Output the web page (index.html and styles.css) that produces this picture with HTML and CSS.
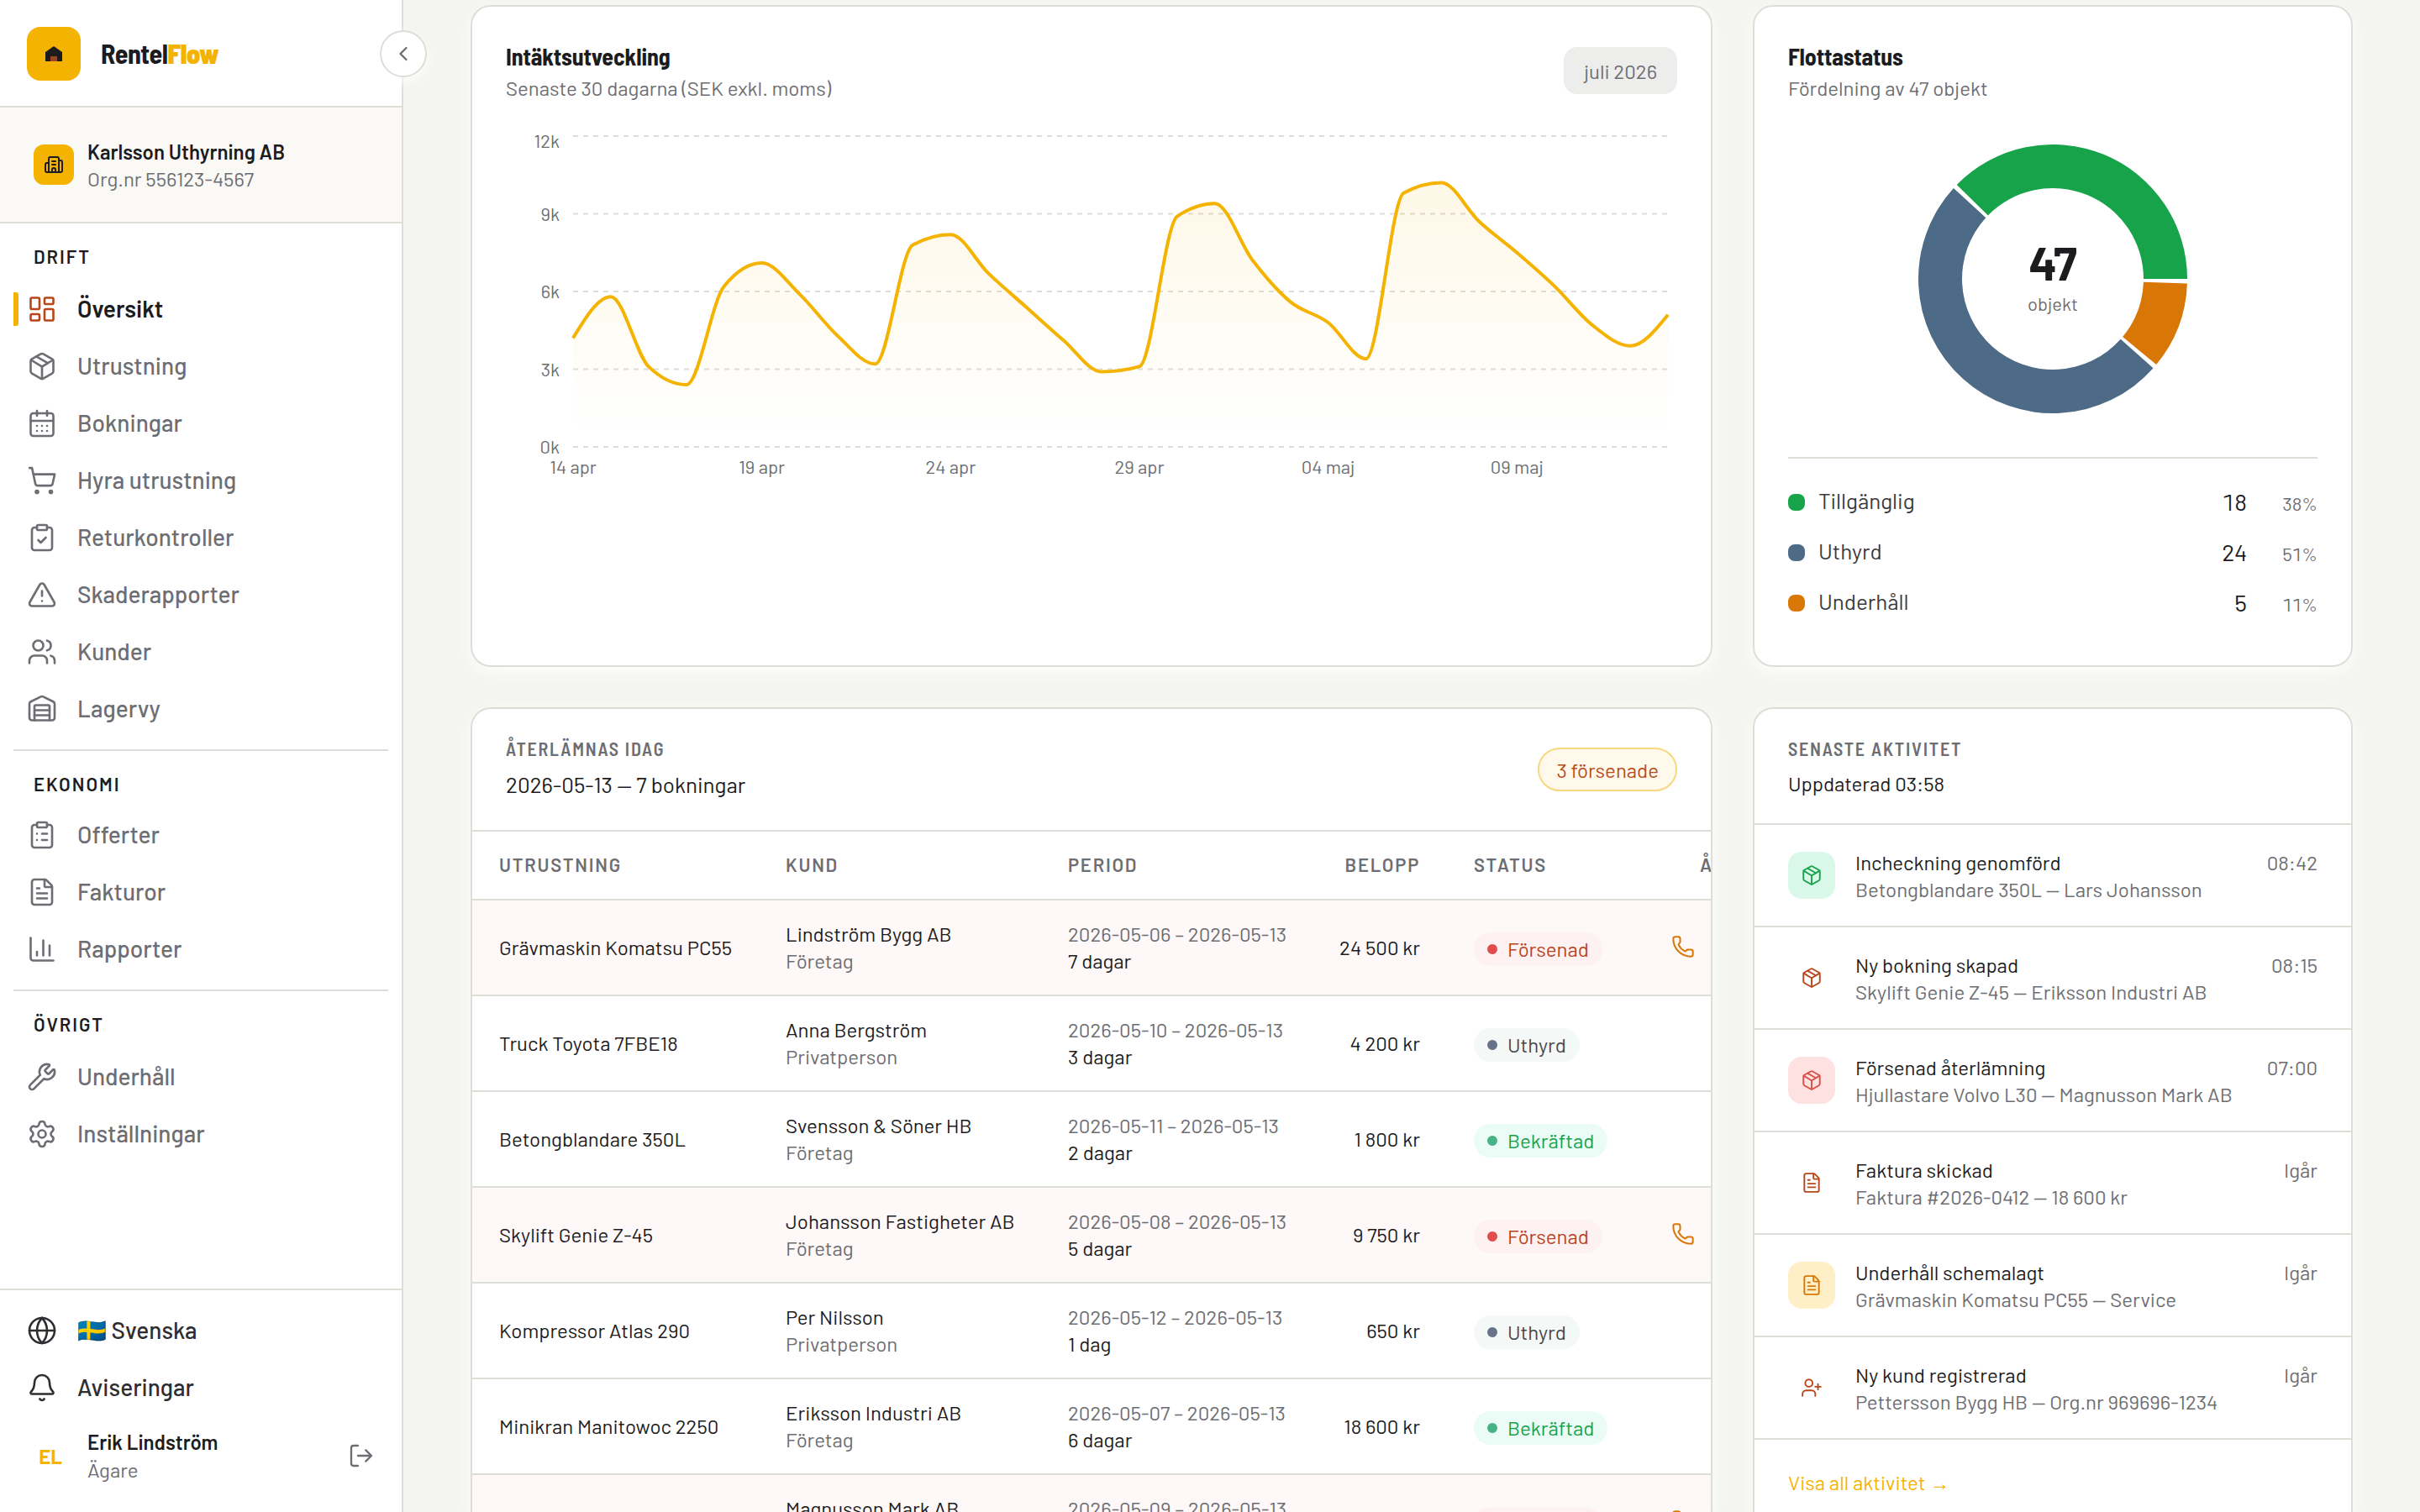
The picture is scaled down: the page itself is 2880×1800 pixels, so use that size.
FILE: index.html
```
<!DOCTYPE html>
<html lang="sv">

<head>
	<meta charset="UTF-8">
	<title>RentelFlow</title>
	<link rel="stylesheet" href="styles.css">
</head>

<body>

	<!-- Icon set, 24x24 grid -->
	<svg class="sprite">
		<symbol id="i-dash" viewBox="0 0 24 24"><rect x="3" y="3" width="7" height="9" rx="1"/><rect x="14" y="3" width="7" height="5" rx="1"/><rect x="14" y="12" width="7" height="9" rx="1"/><rect x="3" y="16" width="7" height="5" rx="1"/></symbol>
		<symbol id="i-box" viewBox="0 0 24 24"><path d="M11 21.73a2 2 0 0 0 2 0l7-4A2 2 0 0 0 21 16V8a2 2 0 0 0-1-1.73l-7-4a2 2 0 0 0-2 0l-7 4A2 2 0 0 0 3 8v8a2 2 0 0 0 1 1.73z"/><path d="M12 22V12"/><path d="m3.3 7 7.703 4.734a2 2 0 0 0 1.994 0L20.7 7"/><path d="m7.5 4.27 9 5.15"/></symbol>
		<symbol id="i-calendar" viewBox="0 0 24 24"><path d="M8 2v4M16 2v4"/><rect x="3" y="4" width="18" height="18" rx="2"/><path d="M3 10h18M8 14h.01M12 14h.01M16 14h.01M8 18h.01M12 18h.01M16 18h.01"/></symbol>
		<symbol id="i-cart" viewBox="0 0 24 24"><circle cx="8" cy="21" r="1"/><circle cx="19" cy="21" r="1"/><path d="M2.05 2.05h2l2.66 12.42a2 2 0 0 0 2 1.58h9.78a2 2 0 0 0 1.95-1.57l1.65-7.43H5.12"/></symbol>
		<symbol id="i-check" viewBox="0 0 24 24"><rect x="8" y="2" width="8" height="4" rx="1"/><path d="M16 4h2a2 2 0 0 1 2 2v14a2 2 0 0 1-2 2H6a2 2 0 0 1-2-2V6a2 2 0 0 1 2-2h2"/><path d="m9 14 2 2 4-4"/></symbol>
		<symbol id="i-alert" viewBox="0 0 24 24"><path d="m21.73 18-8-14a2 2 0 0 0-3.48 0l-8 14A2 2 0 0 0 4 21h16a2 2 0 0 0 1.73-3"/><path d="M12 9v4M12 17h.01"/></symbol>
		<symbol id="i-users" viewBox="0 0 24 24"><path d="M16 21v-2a4 4 0 0 0-4-4H6a4 4 0 0 0-4 4v2"/><circle cx="9" cy="7" r="4"/><path d="M22 21v-2a4 4 0 0 0-3-3.87M16 3.13a4 4 0 0 1 0 7.75"/></symbol>
		<symbol id="i-warehouse" viewBox="0 0 24 24"><path d="M18 21V10a1 1 0 0 0-1-1H7a1 1 0 0 0-1 1v11"/><path d="M22 19a2 2 0 0 1-2 2H4a2 2 0 0 1-2-2V8a2 2 0 0 1 1.132-1.803l7.95-3.974a2 2 0 0 1 1.837 0l7.948 3.974A2 2 0 0 1 22 8z"/><path d="M6 13h12M6 17h12"/></symbol>
		<symbol id="i-list" viewBox="0 0 24 24"><rect x="8" y="2" width="8" height="4" rx="1"/><path d="M16 4h2a2 2 0 0 1 2 2v14a2 2 0 0 1-2 2H6a2 2 0 0 1-2-2V6a2 2 0 0 1 2-2h2"/><path d="M12 11h4M12 16h4M8 11h.01M8 16h.01"/></symbol>
		<symbol id="i-file" viewBox="0 0 24 24"><path d="M6 22a2 2 0 0 1-2-2V4a2 2 0 0 1 2-2h8a2.4 2.4 0 0 1 1.704.706l3.588 3.588A2.4 2.4 0 0 1 20 8v12a2 2 0 0 1-2 2z"/><path d="M14 2v5a1 1 0 0 0 1 1h5M10 9H8M16 13H8M16 17H8"/></symbol>
		<symbol id="i-chart" viewBox="0 0 24 24"><path d="M3 3v16a2 2 0 0 0 2 2h16M18 17V9M13 17V5M8 17v-3"/></symbol>
		<symbol id="i-wrench" viewBox="0 0 24 24"><path d="M14.7 6.3a1 1 0 0 0 0 1.4l1.6 1.6a1 1 0 0 0 1.4 0l3.106-3.105c.32-.322.863-.22.983.218a6 6 0 0 1-8.259 7.057l-7.91 7.91a1 1 0 0 1-2.999-3l7.91-7.91a6 6 0 0 1 7.057-8.259c.438.12.54.662.219.984z"/></symbol>
		<symbol id="i-settings" viewBox="0 0 24 24"><path d="M9.671 4.136a2.34 2.34 0 0 1 4.659 0 2.34 2.34 0 0 0 3.319 1.915 2.34 2.34 0 0 1 2.33 4.033 2.34 2.34 0 0 0 0 3.831 2.34 2.34 0 0 1-2.33 4.033 2.34 2.34 0 0 0-3.319 1.915 2.34 2.34 0 0 1-4.659 0 2.34 2.34 0 0 0-3.32-1.915 2.34 2.34 0 0 1-2.33-4.033 2.34 2.34 0 0 0 0-3.831A2.34 2.34 0 0 1 6.35 6.051a2.34 2.34 0 0 0 3.319-1.915"/><circle cx="12" cy="12" r="3"/></symbol>
		<symbol id="i-globe" viewBox="0 0 24 24"><circle cx="12" cy="12" r="10"/><path d="M12 2a14.5 14.5 0 0 0 0 20 14.5 14.5 0 0 0 0-20M2 12h20"/></symbol>
		<symbol id="i-bell" viewBox="0 0 24 24"><path d="M10.268 21a2 2 0 0 0 3.464 0"/><path d="M3.262 15.326A1 1 0 0 0 4 17h16a1 1 0 0 0 .74-1.673C19.41 13.956 18 12.499 18 8A6 6 0 0 0 6 8c0 4.499-1.411 5.956-2.738 7.326"/></symbol>
		<symbol id="i-logout" viewBox="0 0 24 24"><path d="m16 17 5-5-5-5M21 12H9M9 21H5a2 2 0 0 1-2-2V5a2 2 0 0 1 2-2h4"/></symbol>
		<symbol id="i-building" viewBox="0 0 24 24"><path d="M10 12h4M10 8h4M14 21v-3a2 2 0 0 0-4 0v3"/><path d="M6 10H4a2 2 0 0 0-2 2v7a2 2 0 0 0 2 2h16a2 2 0 0 0 2-2V9a2 2 0 0 0-2-2h-2"/><path d="M6 21V5a2 2 0 0 1 2-2h8a2 2 0 0 1 2 2v16"/></symbol>
		<symbol id="i-phone" viewBox="0 0 24 24"><path d="M13.832 16.568a1 1 0 0 0 1.213-.303l.355-.465A2 2 0 0 1 17 15h3a2 2 0 0 1 2 2v3a2 2 0 0 1-2 2A18 18 0 0 1 2 4a2 2 0 0 1 2-2h3a2 2 0 0 1 2 2v3a2 2 0 0 1-.8 1.6l-.468.351a1 1 0 0 0-.292 1.233 14 14 0 0 0 6.392 6.384"/></symbol>
		<symbol id="i-userplus" viewBox="0 0 24 24"><path d="M16 21v-2a4 4 0 0 0-4-4H6a4 4 0 0 0-4 4v2"/><circle cx="9" cy="7" r="4"/><path d="M19 8v6M22 11h-6"/></symbol>
		<symbol id="i-left" viewBox="0 0 24 24"><path d="m15 18-6-6 6-6"/></symbol>
	</svg>

	<aside class="sidebar">
		<div class="brand">
			<div class="logo">
				<svg width="20" height="18" viewBox="0 0 20 18"><path fill="#1c1c1e" d="M0 7 10 0l10 7v11H0z"/><path fill="#9a451f" d="M6 12h8v6H6z"/></svg>
			</div>
			<span class="brand-name">Rentel<b>Flow</b></span>
			<button class="toggle"><svg class="icon"><use href="#i-left"/></svg></button>
		</div>

		<div class="org">
			<div class="org-icon"><svg class="icon"><use href="#i-building"/></svg></div>
			<div class="org-text">
				<p class="name">Karlsson Uthyrning AB</p>
				<p class="muted">Org.nr 556123-4567</p>
			</div>
		</div>

		<nav>
			<div class="group">
				<h4>DRIFT</h4>
				<a class="active"><svg class="icon"><use href="#i-dash"/></svg>Översikt</a>
				<a><svg class="icon"><use href="#i-box"/></svg>Utrustning</a>
				<a><svg class="icon"><use href="#i-calendar"/></svg>Bokningar</a>
				<a><svg class="icon"><use href="#i-cart"/></svg>Hyra utrustning</a>
				<a><svg class="icon"><use href="#i-check"/></svg>Returkontroller</a>
				<a><svg class="icon"><use href="#i-alert"/></svg>Skaderapporter</a>
				<a><svg class="icon"><use href="#i-users"/></svg>Kunder</a>
				<a><svg class="icon"><use href="#i-warehouse"/></svg>Lagervy</a>
			</div>
			<div class="group">
				<h4>EKONOMI</h4>
				<a><svg class="icon"><use href="#i-list"/></svg>Offerter</a>
				<a><svg class="icon"><use href="#i-file"/></svg>Fakturor</a>
				<a><svg class="icon"><use href="#i-chart"/></svg>Rapporter</a>
			</div>
			<div class="group">
				<h4>ÖVRIGT</h4>
				<a><svg class="icon"><use href="#i-wrench"/></svg>Underhåll</a>
				<a><svg class="icon"><use href="#i-settings"/></svg>Inställningar</a>
			</div>
		</nav>

		<div class="side-footer">
			<a><svg class="icon"><use href="#i-globe"/></svg>🇸🇪 Svenska</a>
			<a><svg class="icon"><use href="#i-bell"/></svg>Aviseringar</a>
			<div class="user">
				<span class="avatar">EL</span>
				<div class="user-text">
					<p class="name">Erik Lindström</p>
					<p class="muted">Ägare</p>
				</div>
				<svg class="icon"><use href="#i-logout"/></svg>
			</div>
		</div>
	</aside>

	<main>

		<section class="card revenue">
			<header class="chart-head">
				<div>
					<h2>Intäktsutveckling</h2>
					<p>Senaste 30 dagarna (SEK exkl. moms)</p>
				</div>
				<span class="month">juli 2026</span>
			</header>
			<svg id="area" class="area" width="1394" height="460" viewBox="0 0 1394 460">
				<defs>
					<linearGradient id="fade" x1="0" y1="0" x2="0" y2="1">
						<stop offset="5%" stop-color="#f5b301" stop-opacity="0.09"/>
						<stop offset="95%" stop-color="#f5b301" stop-opacity="0"/>
					</linearGradient>
				</defs>
			</svg>
		</section>

		<section class="card fleet">
			<header class="chart-head">
				<div>
					<h2>Flottastatus</h2>
					<p>Fördelning av 47 objekt</p>
				</div>
			</header>
			<svg id="donut" class="donut" width="320" height="320" viewBox="-160 -160 320 320">
				<text class="donut-total" x="0" y="1.8">47</text>
				<text class="donut-label" x="0" y="38">objekt</text>
			</svg>
			<ul class="legend">
				<li><i class="green"></i><span>Tillgänglig</span><b>18</b><em>38%</em></li>
				<li><i class="blue"></i><span>Uthyrd</span><b>24</b><em>51%</em></li>
				<li><i class="orange"></i><span>Underhåll</span><b>5</b><em>11%</em></li>
			</ul>
		</section>

		<section class="card returns">
			<header class="list-head">
				<div>
					<h3>ÅTERLÄMNAS IDAG</h3>
					<p>2026-05-13 — 7 bokningar</p>
				</div>
				<span class="late-badge">3 försenade</span>
			</header>
			<table>
				<colgroup><col class="c1"><col class="c2"><col class="c3"><col class="c4"><col class="c5"><col class="c6"></colgroup>
				<thead>
					<tr><th>UTRUSTNING</th><th>KUND</th><th>PERIOD</th><th class="num">BELOPP</th><th>STATUS</th><th class="actions">ÅTGÄRD</th></tr>
				</thead>
				<tbody>
					<tr class="late">
						<td>Grävmaskin Komatsu PC55</td>
						<td>Lindström Bygg AB<small>Företag</small></td>
						<td><small>2026-05-06 – 2026-05-13</small>7 dagar</td>
						<td class="num">24 500 kr</td>
						<td><span class="pill red">Försenad</span></td>
						<td><svg class="icon phone"><use href="#i-phone"/></svg></td>
					</tr>
					<tr>
						<td>Truck Toyota 7FBE18</td>
						<td>Anna Bergström<small>Privatperson</small></td>
						<td><small>2026-05-10 – 2026-05-13</small>3 dagar</td>
						<td class="num">4 200 kr</td>
						<td><span class="pill gray">Uthyrd</span></td>
						<td></td>
					</tr>
					<tr>
						<td>Betongblandare 350L</td>
						<td>Svensson &amp; Söner HB<small>Företag</small></td>
						<td><small>2026-05-11 – 2026-05-13</small>2 dagar</td>
						<td class="num">1 800 kr</td>
						<td><span class="pill ok">Bekräftad</span></td>
						<td></td>
					</tr>
					<tr class="late">
						<td>Skylift Genie Z-45</td>
						<td>Johansson Fastigheter AB<small>Företag</small></td>
						<td><small>2026-05-08 – 2026-05-13</small>5 dagar</td>
						<td class="num">9 750 kr</td>
						<td><span class="pill red">Försenad</span></td>
						<td><svg class="icon phone"><use href="#i-phone"/></svg></td>
					</tr>
					<tr>
						<td>Kompressor Atlas 290</td>
						<td>Per Nilsson<small>Privatperson</small></td>
						<td><small>2026-05-12 – 2026-05-13</small>1 dag</td>
						<td class="num">650 kr</td>
						<td><span class="pill gray">Uthyrd</span></td>
						<td></td>
					</tr>
					<tr>
						<td>Minikran Manitowoc 2250</td>
						<td>Eriksson Industri AB<small>Företag</small></td>
						<td><small>2026-05-07 – 2026-05-13</small>6 dagar</td>
						<td class="num">18 600 kr</td>
						<td><span class="pill ok">Bekräftad</span></td>
						<td></td>
					</tr>
					<tr class="late">
						<td></td>
						<td>Magnusson Mark AB<small></small></td>
						<td><small>2026-05-09 – 2026-05-13</small><small></small></td>
						<td class="num"></td>
						<td><span class="pill red wide"></span></td>
						<td><svg class="icon phone"><use href="#i-phone"/></svg></td>
					</tr>
				</tbody>
			</table>
		</section>

		<section class="card activity">
			<header class="list-head">
				<div>
					<h3>SENASTE AKTIVITET</h3>
					<p>Uppdaterad 03:58</p>
				</div>
			</header>
			<ul>
				<li>
					<span class="tile t-green"><svg class="icon"><use href="#i-box"/></svg></span>
					<div><p>Incheckning genomförd</p><p class="muted">Betongblandare 350L — Lars Johansson</p></div>
					<time>08:42</time>
				</li>
				<li>
					<span class="tile"><svg class="icon"><use href="#i-box"/></svg></span>
					<div><p>Ny bokning skapad</p><p class="muted">Skylift Genie Z-45 — Eriksson Industri AB</p></div>
					<time>08:15</time>
				</li>
				<li>
					<span class="tile t-red"><svg class="icon"><use href="#i-box"/></svg></span>
					<div><p>Försenad återlämning</p><p class="muted">Hjullastare Volvo L30 — Magnusson Mark AB</p></div>
					<time>07:00</time>
				</li>
				<li>
					<span class="tile"><svg class="icon"><use href="#i-file"/></svg></span>
					<div><p>Faktura skickad</p><p class="muted">Faktura #2026-0412 — 18 600 kr</p></div>
					<time>Igår</time>
				</li>
				<li>
					<span class="tile t-yellow"><svg class="icon"><use href="#i-file"/></svg></span>
					<div><p>Underhåll schemalagt</p><p class="muted">Grävmaskin Komatsu PC55 — Service</p></div>
					<time>Igår</time>
				</li>
				<li>
					<span class="tile"><svg class="icon"><use href="#i-userplus"/></svg></span>
					<div><p>Ny kund registrerad</p><p class="muted">Pettersson Bygg HB — Org.nr 969696-1234</p></div>
					<time>Igår</time>
				</li>
			</ul>
			<a class="show-all">Visa all aktivitet →</a>
		</section>

	</main>

	<script src="charts.js"></script>
</body>

</html>
```
FILE: styles.css
```
* {
	box-sizing: border-box;
	margin: 0;
	padding: 0;
}

body {
	display: flex;
	height: 1800px;
	overflow: hidden;
	background: #f4f5f0;
	color: #1c1c1e;
	font-family: Barlow, Roboto, sans-serif;
	font-size: 24px;
}

ul { list-style: none; }

.sprite { display: none; }

.icon {
	flex: none;
	width: 36px;
	height: 36px;
	fill: none;
	stroke: currentColor;
	stroke-width: 1.75;
	stroke-linecap: round;
	stroke-linejoin: round;
}

.muted { color: #6d6e73; }

/* Sidebar */

.sidebar {
	position: relative;
	z-index: 1;
	display: flex;
	flex-direction: column;
	flex: none;
	width: 480px;
	height: 1800px;
	background: #fff;
	border-right: 2px solid #deded9;
}

.brand {
	position: relative;
	display: flex;
	align-items: center;
	gap: 24px;
	height: 128px;
	padding: 0 32px;
	border-bottom: 2px solid #deded9;
}

.logo {
	display: flex;
	align-items: center;
	justify-content: center;
	width: 64px;
	height: 64px;
	margin-top: 2px;
	border-radius: 16px;
	background: #f5b301;
}

.brand-name {
	font-family: "Barlow Semi Condensed", Barlow, Roboto, sans-serif;
	font-size: 32px;
	font-weight: 700;
	letter-spacing: -0.016em;
}

.brand-name b { color: #f5b301; }

.toggle {
	position: absolute;
	top: 36px;
	right: -30px;
	display: flex;
	align-items: center;
	justify-content: center;
	width: 56px;
	height: 56px;
	border: 2px solid #deded9;
	border-radius: 50%;
	background: #fff;
	color: #6d6e73;
	box-shadow: 0 6px 16px rgba(255, 255, 255, .8);
}

.toggle .icon {
	width: 28px;
	height: 28px;
	stroke-width: 2;
}

.org {
	display: flex;
	align-items: center;
	gap: 16px;
	height: 138px;
	padding-left: 40px;
	background: #faf9f6;
	border-bottom: 2px solid #deded9;
	line-height: 31.2px;
}

.org-text { padding-top: 1px; }

.org-icon {
	display: flex;
	align-items: center;
	justify-content: center;
	width: 48px;
	height: 48px;
	border-radius: 12px;
	background: #f5b301;
}

.org-icon .icon {
	width: 24px;
	height: 24px;
	stroke-width: 2;
}

.name { font-weight: 600; }

nav {
	flex: 1;
	padding: 10px 16px 0;
}

.group + .group {
	margin-top: 14px;
	padding-top: 10px;
	border-top: 2px solid #deded9;
}

h4 {
	height: 56px;
	padding-left: 24px;
	font-size: 22px;
	font-weight: 600;
	letter-spacing: .09em;
	line-height: 58px;
}

.group:first-child h4,
.group:last-child h4 { height: 58px; }

.sidebar a {
	position: relative;
	display: flex;
	align-items: center;
	gap: 24px;
	height: 68px;
	padding: 0 0 2px 16px;
	color: #6d6e73;
	font-size: 28px;
	font-weight: 500;
}

.sidebar a .icon { margin-top: 2px; }

.sidebar a.active {
	color: #1c1c1e;
	font-weight: 600;
}

.active .icon { color: #b8461a; }

.active::before {
	content: "";
	position: absolute;
	left: 0;
	top: 14px;
	width: 6px;
	height: 40px;
	border-radius: 0 3px 3px 0;
	background: #f5b301;
}

.side-footer {
	height: 266px;
	padding: 14px 16px 0;
	border-top: 2px solid #deded9;
}

.side-footer a { color: #2e2e32; }

.user {
	display: flex;
	align-items: center;
	gap: 16px;
	height: 94px;
	padding: 0 16px;
	line-height: 33px;
}

.avatar {
	width: 56px;
	text-align: center;
	color: #f5b301;
	font-weight: 700;
}

.user-text {
	flex: 1;
	padding-bottom: 1px;
}

.user .icon {
	width: 32px;
	height: 32px;
	color: #6d6e73;
}

/* Page grid */

main {
	display: grid;
	flex: 1;
	grid-template-columns: 1478px 714px;
	grid-template-rows: 788px 958px;
	gap: 48px;
	height: 1800px;
	overflow: hidden;
	padding: 6px 80px 0;
}

.card {
	overflow: hidden;
	background: #fff;
	border: 2px solid #deded9;
	border-radius: 24px;
	box-shadow: 0 6px 20px rgba(255, 255, 255, .9);
}

.revenue,
.fleet { padding: 40px 40px 0; }

/* These two run on below the fold */
.returns,
.activity {
	border-bottom: 0;
	border-radius: 24px 24px 0 0;
}

.chart-head {
	display: flex;
	justify-content: space-between;
	height: 75px;
}

h2 {
	font-family: "Barlow Semi Condensed", Barlow, Roboto, sans-serif;
	font-size: 28px;
	font-weight: 700;
	letter-spacing: -0.004em;
	line-height: 38px;
}

.chart-head p {
	color: #6d6e73;
	line-height: 37px;
}

.month {
	height: 56px;
	margin-top: 8px;
	padding: 0 24px;
	border-radius: 16px;
	background: #ededeb;
	color: #6d6e73;
	line-height: 57px;
}

.area,
.donut { display: block; }

.area line {
	stroke: #deded9;
	stroke-width: 2;
	stroke-dasharray: 6 6;
}

.area text {
	fill: #6d6e73;
	font-size: 22px;
}

.area .ytick { text-anchor: end; }
.area .xtick { text-anchor: middle; }

.area .curve {
	fill: none;
	stroke: #f5b301;
	stroke-width: 4;
}

.donut { margin: 49px auto 52px; }

.donut text { text-anchor: middle; }

.donut-total {
	font-size: 56px;
	font-weight: 700;
	fill: #1c1c1e;
}

.donut-label {
	font-size: 22px;
	fill: #6d6e73;
}

.legend {
	padding-top: 22px;
	border-top: 2px solid #deded9;
}

.legend li {
	display: flex;
	align-items: center;
	height: 60px;
}

.legend i {
	width: 20px;
	height: 20px;
	margin-right: 16px;
	border-radius: 8px;
}

.legend .green { background: #17a34a; }
.legend .blue { background: #4d6a87; }
.legend .orange { background: #d97706; }

.legend span {
	flex: 1;
	padding-bottom: 5px;
	color: #3a3a3e;
	font-size: 26px;
}

.legend b,
.legend em {
	font-style: normal;
	font-variant-numeric: tabular-nums;
}

.legend b {
	padding-bottom: 2px;
	font-size: 28px;
	font-weight: 400;
}

.legend em {
	width: 84px;
	padding-top: 2px;
	color: #6d6e73;
	font-size: 22px;
	text-align: right;
}

/* Returns table */

.list-head {
	display: flex;
	align-items: center;
	justify-content: space-between;
	height: 146px;
	padding: 0 40px;
	border-bottom: 2px solid #deded9;
}

.list-head > div {
	align-self: flex-start;
	padding-top: 32px;
}

h3 {
	margin-bottom: 8px;
	color: #6d6e73;
	font-family: "Barlow Semi Condensed", Barlow, Roboto, sans-serif;
	font-size: 22px;
	font-weight: 600;
	letter-spacing: .08em;
	line-height: 30px;
}

.list-head p {
	font-size: 26px;
	line-height: 39px;
}

.late-badge {
	height: 52px;
	padding: 0 20px;
	border: 2px solid #f8d780;
	border-radius: 26px;
	background: #fff9ec;
	color: #b84c1a;
	line-height: 49px;
}

table {
	width: 1695px;
	border-collapse: separate;
	border-spacing: 0;
	table-layout: fixed;
	line-height: 32px;
}

.c1 { width: 341px; }
.c2 { width: 336px; }
.c3 { width: 323px; }
.c4 { width: 160px; }
.c5 { width: 235px; }
.c6 { width: 300px; }

th,
td {
	padding: 0 32px;
	border-bottom: 2px solid #deded9;
	text-align: left;
	vertical-align: middle;
	white-space: nowrap;
}

th {
	height: 82px;
	padding-bottom: 2px;
	color: #6d6e73;
	font-size: 22px;
	font-weight: 600;
	letter-spacing: .08em;
}

td { height: 114px; }

.num { text-align: right; }

th.actions { padding-left: 66px; }

td small {
	display: block;
	height: 32px;
	color: #6d6e73;
	font-size: 24px;
}

.late { background: #fef8f8; }

.pill {
	display: inline-flex;
	align-items: center;
	gap: 12px;
	height: 40px;
	margin-top: 4px;
	padding: 0 16px;
	border-radius: 20px;
	vertical-align: middle;
}

.pill::before {
	content: "";
	width: 12px;
	height: 12px;
	border-radius: 50%;
	background: currentColor;
}

.pill.wide { width: 151px; }

.pill.red { background: #fef1f1; color: #b9441e; }
.pill.red::before { background: #e14d4d; }
.pill.gray { background: #f4f8f7; color: #48484c; }
.pill.gray::before { background: #66738a; }
.pill.ok { background: #eafcf5; color: #17a34a; }
.pill.ok::before { background: #46b286; }

.phone {
	display: block;
	width: 28px;
	height: 28px;
	margin-bottom: 2px;
	color: #d97706;
}

/* Activity feed */

.activity .list-head { height: 138px; }

.activity .list-head p {
	font-size: 24px;
	line-height: 38px;
}

.activity li {
	display: flex;
	align-items: center;
	gap: 24px;
	height: 122px;
	padding: 0 40px;
	border-bottom: 2px solid #deded9;
	line-height: 32px;
}

.activity li div {
	flex: 1;
	padding-top: 1px;
}

.activity time {
	height: 63px;
	color: #6d6e73;
}

.tile {
	display: flex;
	align-items: center;
	justify-content: center;
	width: 56px;
	height: 56px;
	border-radius: 16px;
	color: #b8461a;
}

.tile .icon {
	width: 26px;
	height: 26px;
}

.t-green { background: #d9f8ea; color: #17a34a; }
.t-red { background: #fee2e2; color: #dc4f45; }
.t-yellow { background: #feefc6; color: #d97706; }

.show-all {
	display: block;
	padding: 36px 40px 0;
	color: #f5b301;
	line-height: 30px;
}
```
FILE: charts.js
```
var NS = "http://www.w3.org/2000/svg";

function add(parent, tag, attrs, text) {
	var el = document.createElementNS(NS, tag);
	for (var k in attrs) el.setAttribute(k, attrs[k]);
	if (text) el.textContent = text;
	parent.appendChild(el);
	return el;
}

// Daily revenue in thousands, 14 apr - 13 maj
var revenue = [4.2, 5.8, 3.1, 2.4, 6.2, 7.1, 5.9, 4.3, 3.2, 7.8, 8.2, 6.7, 5.4, 4.1, 2.9,
	3.1, 8.9, 9.4, 7.2, 5.6, 4.8, 3.4, 9.8, 10.2, 8.7, 7.5, 6.2, 4.7, 3.9, 5.1];

// Monotone cubic through the points, so the curve never overshoots
function monotone(p) {
	var n = p.length, d = [], m = [], i;
	for (i = 0; i < n - 1; i++) d.push((p[i + 1][1] - p[i][1]) / (p[i + 1][0] - p[i][0]));
	for (i = 1; i < n - 1; i++) {
		m[i] = d[i - 1] * d[i] <= 0 ? 0 :
			Math.sign(d[i]) * Math.min(Math.abs(d[i - 1]), Math.abs(d[i]), Math.abs(d[i - 1] + d[i]) / 4) * 2;
	}
	m[0] = (3 * d[0] - m[1]) / 2;
	m[n - 1] = (3 * d[n - 2] - m[n - 2]) / 2;
	var s = "M" + p[0];
	for (i = 0; i < n - 1; i++) {
		var h = (p[i + 1][0] - p[i][0]) / 3;
		s += "C" + [p[i][0] + h, p[i][1] + h * m[i], p[i + 1][0] - h, p[i + 1][1] - h * m[i + 1], p[i + 1][0], p[i + 1][1]];
	}
	return s;
}

function drawArea() {
	var svg = document.getElementById("area");
	var left = 80, right = 1383, top = 39, bottom = 409;
	[12, 9, 6, 3, 0].forEach(function (v) {
		var y = bottom - v / 12 * (bottom - top);
		add(svg, "line", { x1: left, x2: right, y1: y, y2: y });
		add(svg, "text", { "class": "ytick", x: 64, y: v == 12 ? y + 14 : y + 8 }, v + "k");
	});
	["14 apr", "19 apr", "24 apr", "29 apr", "04 maj", "09 maj"].forEach(function (t, i) {
		add(svg, "text", { "class": "xtick", x: left + i * 5 * (right - left) / 29, y: 441 }, t);
	});
	var pts = revenue.map(function (v, i) {
		return [left + i * (right - left) / 29, bottom - v / 12 * (bottom - top)];
	});
	var d = monotone(pts);
	add(svg, "path", { d: d + "L" + right + "," + bottom + "L" + left + "," + bottom + "Z", fill: "url(#fade)" });
	add(svg, "path", { "class": "curve", d: d });
}

function drawDonut() {
	var svg = document.getElementById("donut");
	var gap = 2, a = 0, R = 160, r = 108;
	[[18, "#17a34a"], [24, "#4d6a87"], [5, "#d97706"]].forEach(function (s) {
		var b = a + s[0] / 47 * (360 - 3 * gap);
		var pt = function (rad, deg) {
			return rad * Math.cos(deg * Math.PI / 180) + " " + -rad * Math.sin(deg * Math.PI / 180);
		};
		var big = b - a > 180 ? 1 : 0;
		add(svg, "path", {
			fill: s[1],
			d: "M" + pt(R, a) + "A" + R + " " + R + " 0 " + big + " 0 " + pt(R, b) +
				"L" + pt(r, b) + "A" + r + " " + r + " 0 " + big + " 1 " + pt(r, a) + "Z"
		});
		a = b + gap;
	});
}

drawArea();
drawDonut();
```
